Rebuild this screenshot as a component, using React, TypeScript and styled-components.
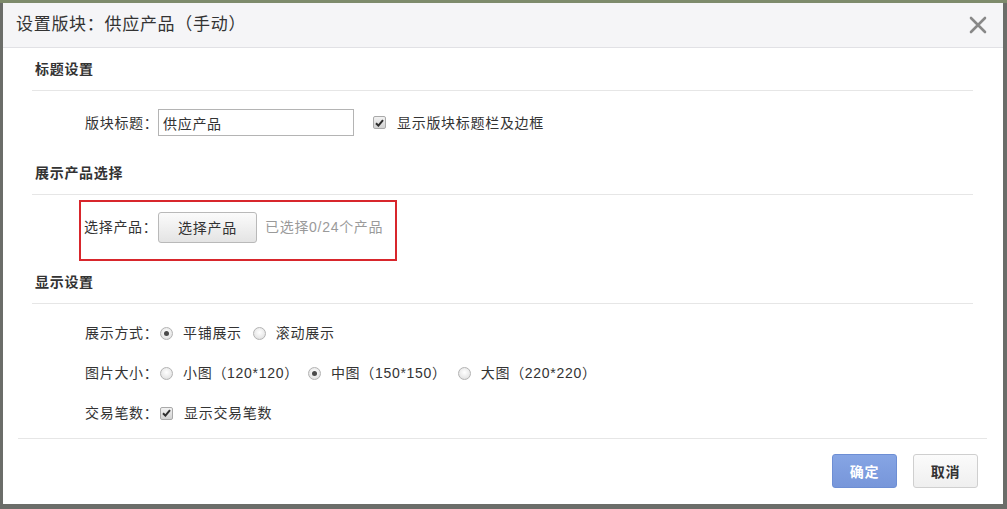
import React from 'react';
import styled, { createGlobalStyle } from 'styled-components';

const Global = createGlobalStyle`
  html, body { margin: 0; padding: 0; }
  body {
    background: #6d706a;
    font-family: "Liberation Sans", "Noto Sans CJK SC", sans-serif;
    font-size: 14px;
    letter-spacing: 0.7px;
    color: #333;
  }
  * { box-sizing: border-box; }
`;

const Page = styled.div`
  width: 1007px;
  height: 509px;
  padding: 3px 4px 5px 3px;
  background: linear-gradient(#7e8b6c 0, #7e8b6c 3px, #6b6d69 3px, #6b6d69 100%);
`;

const Dialog = styled.div`
  height: 501px;
  background: #fff;
  display: flex;
  flex-direction: column;
`;

const Header = styled.div`
  height: 45px;
  flex: none;
  background: #f5f5f7;
  border-bottom: 1px solid #e1e1e5;
  display: flex;
  align-items: center;
  justify-content: space-between;
  padding: 0 15px 0 13px;
`;

const Title = styled.div`
  font-size: 17px;
  letter-spacing: 0.7px;
  line-height: 24px;
  color: #333;
`;

const Close = styled.button`
  border: 0;
  background: none;
  padding: 0;
  width: 20px;
  height: 20px;
  display: flex;
  align-items: center;
  justify-content: center;
  cursor: pointer;
`;

const SectionHead = styled.div`
  height: 43px;
  margin: 0 30px 0 29px;
  padding: 0 0 1px 3px;
  border-bottom: 1px solid #e6e6e6;
  display: flex;
  align-items: center;
  font-weight: bold;
  font-size: 14px;
  line-height: 20px;
  color: #333;
`;

const Row = styled.div<{ $h?: number; $mt?: number; $mb?: number }>`
  display: flex;
  align-items: center;
  height: ${p => p.$h ?? 40}px;
  margin: ${p => p.$mt ?? 0}px 0 ${p => p.$mb ?? 0}px 82px;
  line-height: 20px;
`;

const Label = styled.span`
  width: 73px;
  flex: none;
  white-space: nowrap;
`;

const TextInput = styled.input`
  width: 196px;
  height: 27px;
  border: 1px solid #b4b4b4;
  padding: 0 4px;
  font: inherit;
  font-size: 14px;
  letter-spacing: 0.7px;
  color: #333;
  outline: none;
`;

const Option = styled.label<{ $ml?: number }>`
  display: flex;
  align-items: center;
  margin-left: ${p => p.$ml ?? 2}px;
  white-space: nowrap;
`;

const RadioMark = styled.span<{ $on?: boolean }>`
  width: 13px;
  height: 13px;
  flex: none;
  border-radius: 50%;
  border: 1px solid #b3b3b3;
  background: radial-gradient(circle at 50% 40%, #ffffff 0%, #e9e9e9 60%, #d6d6d6 100%);
  margin-right: 10px;
  display: flex;
  align-items: center;
  justify-content: center;
  &::after {
    content: "";
    display: ${p => (p.$on ? 'block' : 'none')};
    width: 5px;
    height: 5px;
    border-radius: 50%;
    background: #4a4a4a;
  }
`;

const CheckMark = styled.span`
  width: 13px;
  height: 13px;
  flex: none;
  border-radius: 2px;
  border: 1px solid #a9a9a9;
  background: linear-gradient(#f2f2f2, #d2d2d2);
  margin-right: 11px;
  display: flex;
  align-items: center;
  justify-content: center;
`;

const Highlight = styled.div`
  width: 318px;
  height: 61px;
  margin: 5px 0 0 76px;
  border: 2px solid #d8262c;
  display: flex;
  align-items: flex-start;
  padding: 10px 0 0 3px;
  line-height: 20px;
`;

const HLabel = styled.span`
  width: 74px;
  flex: none;
  white-space: nowrap;
  line-height: 31px;
`;

const PickButton = styled.button`
  width: 99px;
  height: 31px;
  border: 1px solid #b9b9b9;
  border-radius: 3px;
  background: linear-gradient(#fbfbfb, #e4e4e4);
  font: inherit;
  font-size: 14px;
  letter-spacing: 0.7px;
  color: #333;
  padding: 0;
  cursor: pointer;
`;

const Hint = styled.span`
  color: #9a9a9a;
  margin-left: 8px;
  line-height: 31px;
`;

const Footer = styled.div`
  margin: 5px 16px 0 15px;
  border-top: 1px solid #e6e6e6;
  padding: 15px 9px 0 0;
  display: flex;
  justify-content: flex-end;
  gap: 16px;
`;

const Btn = styled.button<{ $primary?: boolean }>`
  width: 65px;
  height: 34px;
  border-radius: 3px;
  font: inherit;
  font-size: 14px;
  font-weight: bold;
  letter-spacing: 0.7px;
  padding: 0;
  cursor: pointer;
  border: 1px solid ${p => (p.$primary ? '#6d8ed4' : '#cfcfcf')};
  background: ${p => (p.$primary ? 'linear-gradient(#86a5e4, #7796da)' : 'linear-gradient(#fbfbfb, #efefef)')};
  color: ${p => (p.$primary ? '#fff' : '#333')};
`;

const Check = () => (
  <CheckMark>
    <svg width="9" height="8" viewBox="0 0 9 8">
      <path d="M1 4.2 L3.4 6.6 L8 1.2" fill="none" stroke="#2e2e2e" strokeWidth="2" />
    </svg>
  </CheckMark>
);

export default function App() {
  return (
    <>
      <Global />
      <Page>
        <Dialog>
          <Header>
            <Title>设置版块：供应产品（手动）</Title>
            <Close aria-label="关闭">
              <svg width="18" height="18" viewBox="0 0 18 18">
                <path d="M2 2 L16 16 M16 2 L2 16" stroke="#888" strokeWidth="2.6" strokeLinecap="round" />
              </svg>
            </Close>
          </Header>

          <SectionHead>标题设置</SectionHead>
          <Row $h={27} $mt={18} $mb={16}>
            <Label>版块标题：</Label>
            <TextInput defaultValue="供应产品" />
            <Option $ml={19}>
              <Check />
              显示版块标题栏及边框
            </Option>
          </Row>

          <SectionHead>展示产品选择</SectionHead>
          <Highlight>
            <HLabel>选择产品：</HLabel>
            <PickButton>选择产品</PickButton>
            <Hint>已选择0/24个产品</Hint>
          </Highlight>

          <SectionHead>显示设置</SectionHead>
          <Row $mt={9}>
            <Label>展示方式：</Label>
            <Option>
              <RadioMark $on />
              平铺展示
            </Option>
            <Option $ml={11}>
              <RadioMark />
              滚动展示
            </Option>
          </Row>
          <Row>
            <Label>图片大小：</Label>
            <Option>
              <RadioMark />
              小图（120*120）
            </Option>
            <Option $ml={9}>
              <RadioMark $on />
              中图（150*150）
            </Option>
            <Option $ml={11}>
              <RadioMark />
              大图（220*220）
            </Option>
          </Row>
          <Row>
            <Label>交易笔数：</Label>
            <Option>
              <Check />
              显示交易笔数
            </Option>
          </Row>

          <Footer>
            <Btn $primary>确定</Btn>
            <Btn>取消</Btn>
          </Footer>
        </Dialog>
      </Page>
    </>
  );
}
